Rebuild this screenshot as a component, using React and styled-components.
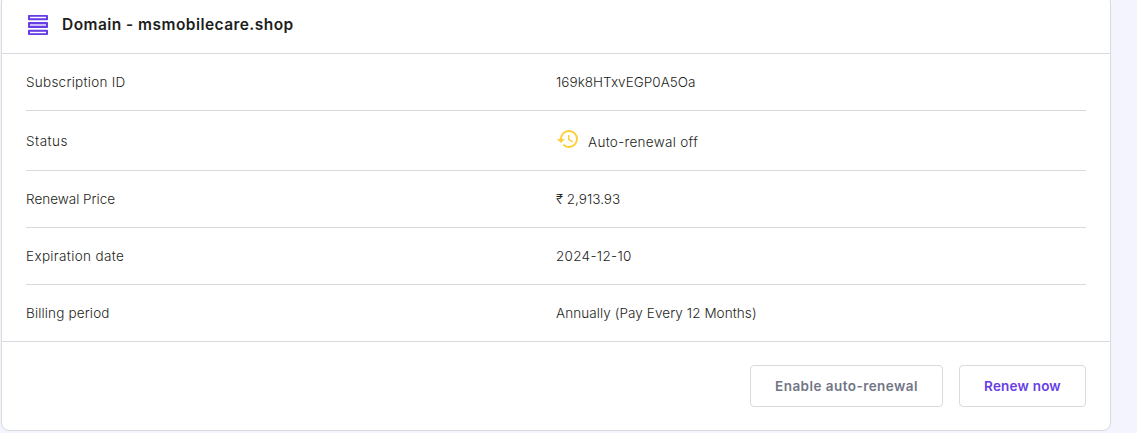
import React from 'react';
import styled, { createGlobalStyle } from 'styled-components';

const GlobalStyle = createGlobalStyle`
  *, *::before, *::after { box-sizing: border-box; }
  html, body { margin: 0; overflow: hidden; background: #f4f4ff; }
  body { font-family: Inter, "Liberation Sans", sans-serif; color: #1d1e20; }
`;

const Page = styled.main`
  display: flex;
  height: 433px;
  padding: 0 26px 2px 1px;
  align-items: flex-end;
`;

const Card = styled.section`
  flex: 1;
  height: 436px;
  background: #fff;
  border: 1px solid #d8dadd;
  border-radius: 8px;
`;

const Header = styled.header`
  display: flex;
  align-items: center;
  gap: 12px;
  height: 58px;
  padding: 0 24px;
  border-bottom: 1px solid #d8dadd;
`;

const Title = styled.h2`
  margin: 0;
  font-size: 15.5px;
  line-height: 24px;
  font-weight: 600;
  letter-spacing: 0.45px;
  white-space: nowrap;
`;

const List = styled.dl`
  margin: 0;
  border-bottom: 1px solid #d8dadd;
`;

const Row = styled.div`
  display: grid;
  grid-template-columns: 1fr 1fr;
  align-items: center;
  height: ${({ $tall }) => ($tall ? 60 : 57)}px;
  margin: 0 24px;
  border-bottom: 1px solid #d8dadd;
  &:last-child { height: 56px; border-bottom: 0; }
`;

const Label = styled.dt`
  font-size: 13.5px;
  line-height: 24px;
  font-weight: 300;
  letter-spacing: ${({ $spacing }) => $spacing || 0}px;
`;

const Value = styled.dd`
  display: flex;
  align-items: center;
  gap: 8px;
  margin: 0;
  font-size: 13.5px;
  line-height: 24px;
  font-weight: 300;
  letter-spacing: ${({ $spacing }) => $spacing || 0}px;
`;

const StatusText = styled.span`
  padding-top: 3px;
`;

const Actions = styled.footer`
  display: flex;
  justify-content: flex-end;
  gap: 16px;
  padding: 23px 24px;
`;

const Button = styled.button`
  width: ${({ $width }) => $width}px;
  height: 42px;
  padding: 0;
  background: #fff;
  border: 1px solid #d8dadd;
  border-radius: 4px;
  color: ${({ $primary }) => ($primary ? '#673de6' : '#727586')};
  font: 600 13.5px/24px Inter, "Liberation Sans", sans-serif;
  letter-spacing: ${({ $spacing }) => $spacing || 0}px;
`;

const Icon = styled.svg`
  display: block;
  flex: none;
`;

const StatusIcon = styled(Icon)`
  margin-bottom: 4px;
`;

const ServerIcon = () => (
  <Icon width="24" height="24" viewBox="0 0 24 24">
    <rect x="2" y="2" width="20" height="5.3" rx="0.8" fill="#673de6" />
    <rect x="4" y="3.8" width="16" height="1.4" fill="#fff" />
    <rect x="2" y="8.9" width="20" height="6.2" rx="0.8" fill="#673de6" />
    <rect x="4" y="11" width="16" height="2" fill="#cbbbf7" />
    <rect x="2" y="16.7" width="20" height="5.3" rx="0.8" fill="#673de6" />
    <rect x="4" y="18.8" width="16" height="1.4" fill="#fff" />
  </Icon>
);

const HistoryIcon = () => (
  <StatusIcon width="24" height="24" viewBox="0 0 24 24" fill="#ffcd35">
    <path d="M13 3a9 9 0 0 0-9 9H1l3.89 3.89.07.14L9 12H6c0-3.87 3.13-7 7-7s7 3.13 7 7-3.13 7-7 7c-1.93 0-3.68-.79-4.94-2.06l-1.42 1.42A8.954 8.954 0 0 0 13 21a9 9 0 0 0 0-18zm-1 5v5l4.28 2.54.72-1.21-3.5-2.08V8H12z" />
  </StatusIcon>
);

const rows = [
  { label: 'Subscription ID', labelSpacing: 0.26, value: '169k8HTxvEGP0A5Oa', valueSpacing: 0.03 },
  { label: 'Status', labelSpacing: 0.5, value: 'Auto-renewal off', valueSpacing: 0.3, status: true },
  { label: 'Renewal Price', value: '₹ 2,913.93' },
  { label: 'Expiration date', labelSpacing: 0.34, value: '2024-12-10', valueSpacing: 0.3 },
  { label: 'Billing period', labelSpacing: 0.15, value: 'Annually (Pay Every 12 Months)', valueSpacing: 0.08 },
];

export default function App() {
  return (
    <>
      <GlobalStyle />
      <Page>
        <Card>
          <Header>
            <ServerIcon />
            <Title>Domain - msmobilecare.shop</Title>
          </Header>
          <List>
            {rows.map((row) => (
              <Row key={row.label} $tall={row.status}>
                <Label $spacing={row.labelSpacing}>{row.label}</Label>
                <Value $spacing={row.valueSpacing}>
                  {row.status ? <><HistoryIcon /><StatusText>{row.value}</StatusText></> : row.value}
                </Value>
              </Row>
            ))}
          </List>
          <Actions>
            <Button $width={193} $spacing={0.45}>Enable auto-renewal</Button>
            <Button $width={127} $spacing={0.2} $primary>Renew now</Button>
          </Actions>
        </Card>
      </Page>
    </>
  );
}
